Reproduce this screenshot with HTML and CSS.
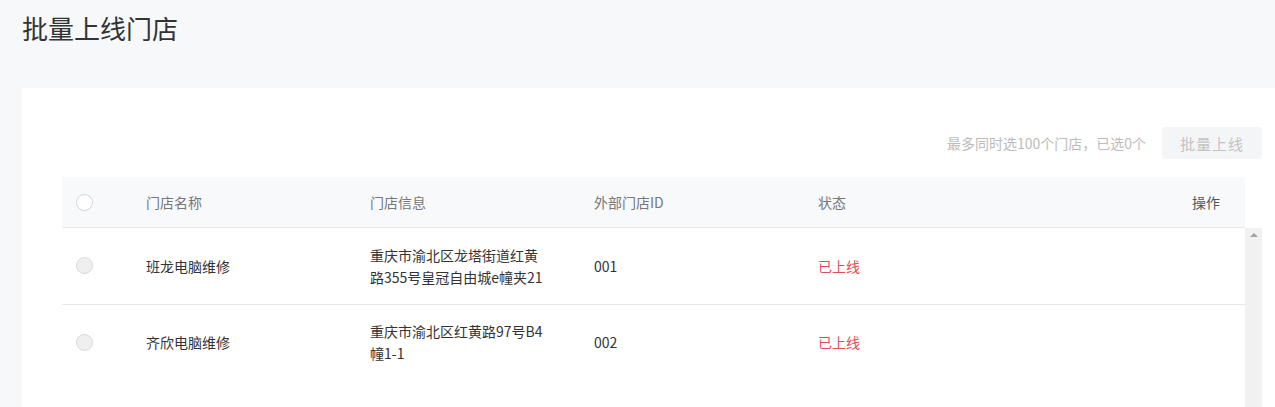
FILE: index.html
```html
<!DOCTYPE html>
<html lang="zh-CN">
<head>
  <meta charset="UTF-8" />
  <meta name="viewport" content="width=device-width, initial-scale=1.0"/>
  <title>批量上线门店</title>
  <link rel="stylesheet" href="styles.css">
</head>
<body>
  <h1 class="page-title">批量上线门店</h1>

  <div class="card">
    <div class="toolbar">
      <span class="hint">最多同时选100个门店，已选0个</span>
      <button class="batch-btn" disabled>批量上线</button>
    </div>

    <div class="table-head">
      <table class="store-table">
        <colgroup>
          <col class="col-check"><col class="col-w"><col class="col-w"><col class="col-w"><col class="col-w"><col>
        </colgroup>
        <thead>
          <tr>
            <th><span class="radio"></span></th>
            <th>门店名称</th>
            <th>门店信息</th>
            <th>外部门店ID</th>
            <th>状态</th>
            <th class="ops">操作</th>
          </tr>
        </thead>
      </table>
    </div>

    <div class="table-body">
      <table class="store-table">
        <colgroup>
          <col class="col-check"><col class="col-w"><col class="col-w"><col class="col-w"><col class="col-w"><col>
        </colgroup>
        <tbody>
          <tr>
            <td><span class="radio disabled"></span></td>
            <td>班龙电脑维修</td>
            <td>重庆市渝北区龙塔街道红黄路355号皇冠自由城e幢夹21</td>
            <td>001</td>
            <td class="status">已上线</td>
            <td></td>
          </tr>
          <tr>
            <td><span class="radio disabled"></span></td>
            <td>齐欣电脑维修</td>
            <td>重庆市渝北区红黄路97号B4幢1-1</td>
            <td>002</td>
            <td class="status">已上线</td>
            <td></td>
          </tr>
        </tbody>
      </table>
      <div class="scrollbar"><span class="arrow-up"></span></div>
    </div>
  </div>
</body>
</html>
```

FILE: styles.css
```css
body {
  margin: 0;
  background: #f7f8fa;
  font-family: "Noto Sans CJK SC", "Liberation Sans", sans-serif;
  color: #333;
  overflow: hidden;
}
.page-title {
  margin: 0;
  height: 88px;
  box-sizing: border-box;
  padding: 13px 22px 0;
  font-size: 26px;
  line-height: 30px;
  font-weight: normal;
  color: #333;
}
.card {
  margin-left: 22px;
  background: #fff;
  padding: 39px 13px 0 40px;
  height: 400px;
}
.toolbar {
  display: flex;
  justify-content: flex-end;
  align-items: center;
  gap: 16px;
}
.hint {
  font-size: 14px;
  line-height: 20px;
  color: #bcbcbc;
}
.batch-btn {
  width: 100px;
  height: 32px;
  border: none;
  border-radius: 2px;
  background: #f4f5f7;
  color: #c4c4c4;
  font-family: inherit;
  font-size: 15px;
  letter-spacing: 1px;
}
.table-head {
  margin-top: 18px;
  width: 1183px;
  background: #f8f9fb;
  border-bottom: 1px solid #ebebeb;
}
.table-body {
  display: flex;
  align-items: flex-start;
}
.store-table {
  width: 1183px;
  border-collapse: collapse;
  table-layout: fixed;
  font-size: 14px;
}
.col-check {
  width: 62px;
}
.col-w {
  width: 224px;
}
.store-table th {
  height: 50px;
  padding: 0 22px;
  line-height: 20px;
  text-align: left;
  font-weight: normal;
  color: #777;
}
.store-table th:first-child,
.store-table td:first-child {
  padding: 0 0 0 14px;
}
.store-table th.ops {
  text-align: right;
  padding-right: 25px;
  color: #555;
}
.store-table td {
  height: 76px;
  box-sizing: border-box;
  padding: 0 22px;
  line-height: 22px;
  color: #333;
  border-bottom: 1px solid #e8e8e8;
  vertical-align: middle;
}
.store-table tr:last-child td {
  border-bottom: none;
}
.store-table td.status {
  color: #dc4f5c;
}
.radio {
  display: block;
  width: 15px;
  height: 15px;
  border: 1px solid #d4d4d4;
  border-radius: 50%;
  background: #fff;
}
.radio.disabled {
  background: #efefef;
  border-color: #dadada;
}
.scrollbar {
  width: 17px;
  background: #f1f1f1;
  flex-shrink: 0;
  height: 240px;
  display: flex;
  justify-content: center;
  padding-top: 5px;
  box-sizing: border-box;
}
.arrow-up {
  width: 0;
  height: 0;
  border-left: 4px solid transparent;
  border-right: 4px solid transparent;
  border-bottom: 4px solid #a3a3a3;
}
```
